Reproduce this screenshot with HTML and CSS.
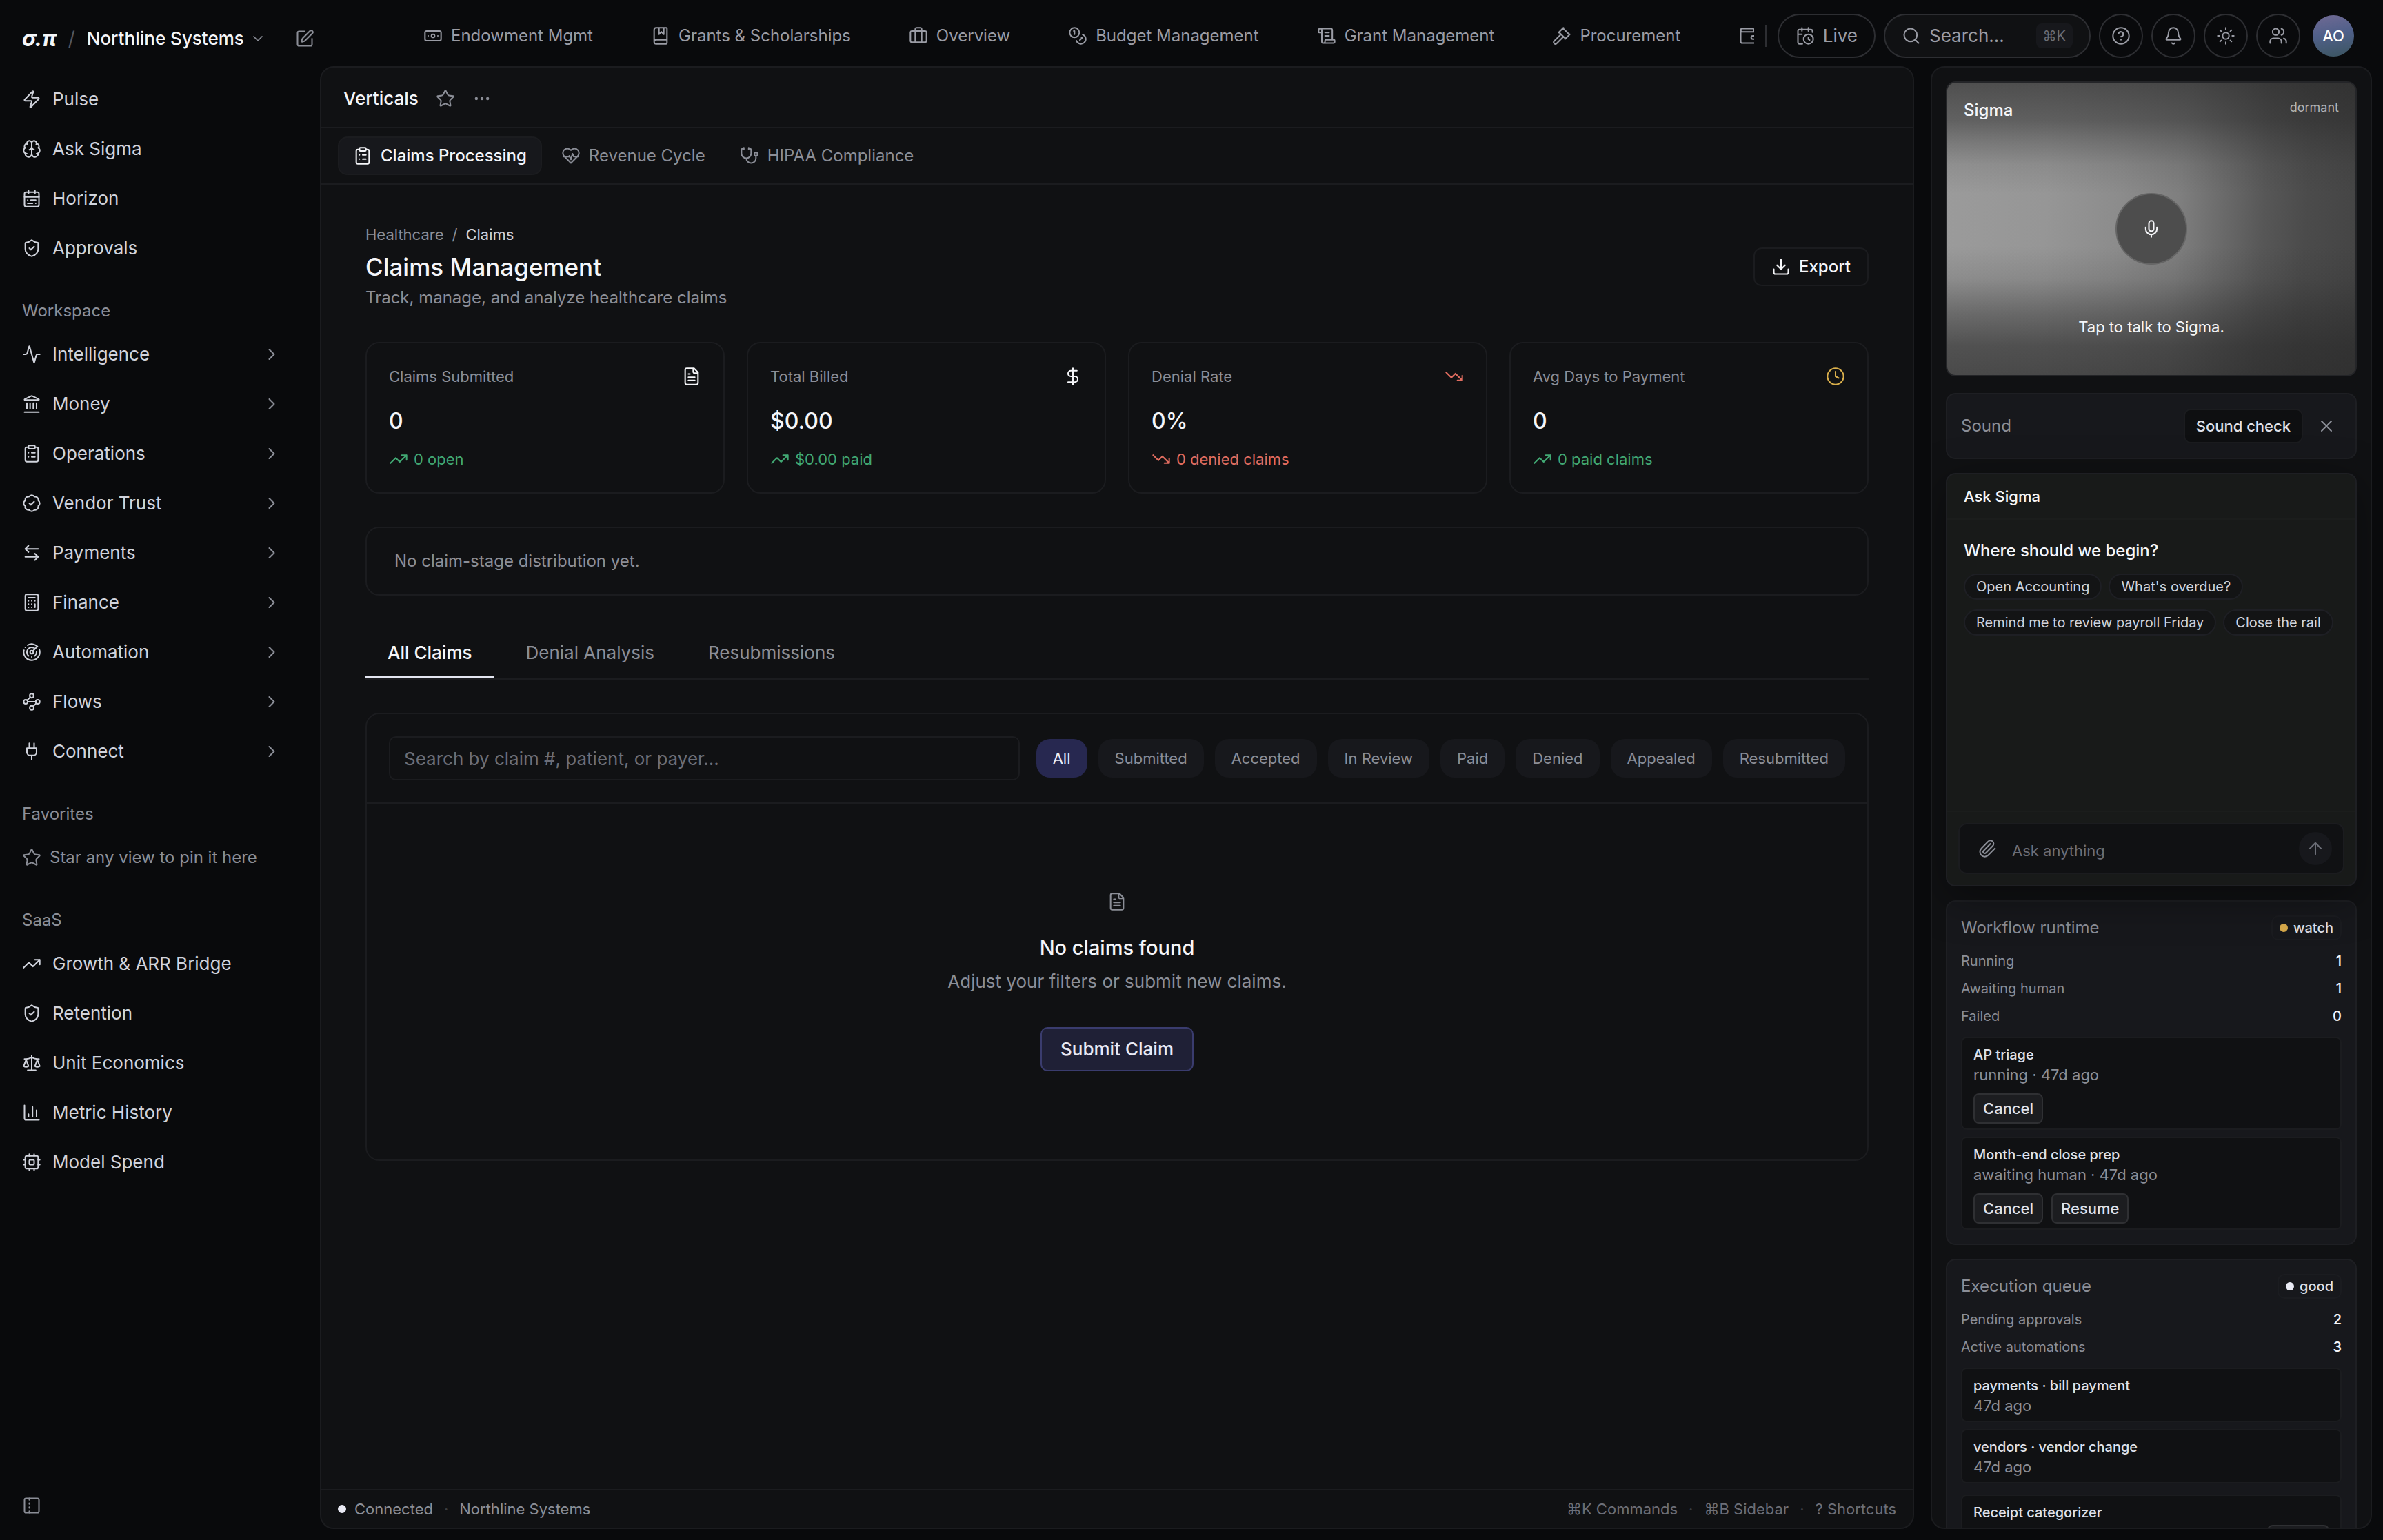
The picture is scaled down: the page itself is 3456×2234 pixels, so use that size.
FILE: index.html
```html
<!DOCTYPE html>
<html lang="en">
<head>
<meta charset="utf-8">
<title>Claims Management</title>
<meta name="viewport" content="width=device-width, initial-scale=1">
<link rel="stylesheet" href="styles.css">
</head>
<body>
<svg class="sprite" aria-hidden="true">
  <symbol id="zap" viewBox="0 0 24 24"><path d="M4 14a1 1 0 0 1-.78-1.63l9.9-10.2a.5.5 0 0 1 .86.46l-1.92 6.02A1 1 0 0 0 13 10h7a1 1 0 0 1 .78 1.63l-9.9 10.2a.5.5 0 0 1-.86-.46l1.92-6.02A1 1 0 0 0 11 14z"/></symbol>
  <symbol id="brain" viewBox="0 0 24 24"><path d="M12 18V5M15 13a4.17 4.17 0 0 1-3-4 4.17 4.17 0 0 1-3 4M17.598 6.5A3 3 0 1 0 12 5a3 3 0 1 0-5.598 1.5M17.997 5.125a4 4 0 0 1 2.526 5.77M18 18a4 4 0 0 0 2-7.464M19.967 17.483A4 4 0 1 1 12 18a4 4 0 1 1-7.967-.517M6 18a4 4 0 0 1-2-7.464M6.003 5.125a4 4 0 0 0-2.526 5.77"/></symbol>
  <symbol id="calendar-range" viewBox="0 0 24 24"><rect width="18" height="18" x="3" y="4" rx="2"/><path d="M16 2v4M3 10h18M8 2v4M17 14h-6M13 18H7M7 14h.01M17 18h.01"/></symbol>
  <symbol id="shield-check" viewBox="0 0 24 24"><path d="M20 13c0 5-3.5 7.5-7.66 8.95a1 1 0 0 1-.67-.01C7.5 20.5 4 18 4 13V6a1 1 0 0 1 1-1c2 0 4.5-1.2 6.24-2.72a1.17 1.17 0 0 1 1.52 0C14.51 3.81 17 5 19 5a1 1 0 0 1 1 1zM9 12l2 2 4-4"/></symbol>
  <symbol id="activity" viewBox="0 0 24 24"><path d="M22 12h-2.48a2 2 0 0 0-1.93 1.46l-2.35 8.36a.25.25 0 0 1-.48 0L9.24 2.18a.25.25 0 0 0-.48 0l-2.35 8.36A2 2 0 0 1 4.49 12H2"/></symbol>
  <symbol id="landmark" viewBox="0 0 24 24"><path d="M10 18v-7M11.12 2.198a2 2 0 0 1 1.76.006l7.866 3.847c.476.233.31.949-.22.949H3.474c-.53 0-.695-.716-.22-.949zM14 18v-7M18 18v-7M3 22h18M6 18v-7"/></symbol>
  <symbol id="clipboard-list" viewBox="0 0 24 24"><rect width="8" height="4" x="8" y="2" rx="1"/><path d="M16 4h2a2 2 0 0 1 2 2v14a2 2 0 0 1-2 2H6a2 2 0 0 1-2-2V6a2 2 0 0 1 2-2h2M12 11h4M12 16h4M8 11h.01M8 16h.01"/></symbol>
  <symbol id="badge-check" viewBox="0 0 24 24"><path d="M3.85 8.62a4 4 0 0 1 4.78-4.77 4 4 0 0 1 6.74 0 4 4 0 0 1 4.78 4.78 4 4 0 0 1 0 6.74 4 4 0 0 1-4.77 4.78 4 4 0 0 1-6.75 0 4 4 0 0 1-4.78-4.77 4 4 0 0 1 0-6.76ZM9 12l2 2 4-4"/></symbol>
  <symbol id="arrow-left-right" viewBox="0 0 24 24"><path d="M8 3 4 7l4 4M4 7h16M16 21l4-4-4-4M20 17H4"/></symbol>
  <symbol id="calculator" viewBox="0 0 24 24"><rect width="16" height="20" x="4" y="2" rx="2"/><path d="M8 6h8M16 14v4M16 10h.01M12 10h.01M8 10h.01M12 14h.01M8 14h.01M12 18h.01M8 18h.01"/></symbol>
  <symbol id="radar" viewBox="0 0 24 24"><path d="M19.07 4.93A10 10 0 0 0 6.99 3.34M4 6h.01M2.29 9.62A10 10 0 1 0 21.31 8.35M16.24 7.76A6 6 0 1 0 8.23 16.67M12 18h.01M17.99 11.66A6 6 0 0 1 15.77 16.67M13.41 10.59l5.66-5.66"/><circle cx="12" cy="12" r="2"/></symbol>
  <symbol id="waypoints" viewBox="0 0 24 24"><circle cx="12" cy="4.5" r="2.5"/><circle cx="4.5" cy="12" r="2.5"/><circle cx="19.5" cy="12" r="2.5"/><circle cx="12" cy="19.5" r="2.5"/><path d="M10.2 6.3l-3.9 3.9M7 12h10M13.8 17.7l3.9-3.9"/></symbol>
  <symbol id="plug" viewBox="0 0 24 24"><path d="M12 22v-5M9 8V2M15 8V2M18 8v5a4 4 0 0 1-4 4h-4a4 4 0 0 1-4-4V8Z"/></symbol>
  <symbol id="star" viewBox="0 0 24 24"><path d="M11.525 2.295a.53.53 0 0 1 .95 0l2.31 4.679a2.123 2.123 0 0 0 1.595 1.16l5.166.756a.53.53 0 0 1 .294.904l-3.736 3.638a2.123 2.123 0 0 0-.611 1.878l.882 5.14a.53.53 0 0 1-.771.56l-4.618-2.428a2.122 2.122 0 0 0-1.973 0L6.396 21.01a.53.53 0 0 1-.77-.56l.881-5.139a2.122 2.122 0 0 0-.611-1.879L2.16 9.795a.53.53 0 0 1 .294-.906l5.165-.755a2.122 2.122 0 0 0 1.597-1.16z"/></symbol>
  <symbol id="trending-up" viewBox="0 0 24 24"><path d="M16 7h6v6M22 7l-8.500 8.500-5-5L2 17"/></symbol>
  <symbol id="trending-down" viewBox="0 0 24 24"><path d="M16 17h6v-6M22 17l-8.500-8.500-5 5L2 7"/></symbol>
  <symbol id="scale" viewBox="0 0 24 24"><path d="M16 16l3-8 3 8c-.87.65-1.92 1-3 1s-2.13-.35-3-1ZM2 16l3-8 3 8c-.87.65-1.92 1-3 1s-2.13-.35-3-1ZM7 21h10M12 3v18M3 7h2c2 0 5-1 7-2 2 1 5 2 7 2h2"/></symbol>
  <symbol id="chart" viewBox="0 0 24 24"><path d="M3 3v16a2 2 0 0 0 2 2h16M18 17V9M13 17V5M8 17v-3"/></symbol>
  <symbol id="cpu" viewBox="0 0 24 24"><rect width="16" height="16" x="4" y="4" rx="2"/><rect width="6" height="6" x="9" y="9" rx="1"/><path d="M15 2v2M15 20v2M2 15h2M2 9h2M20 15h2M20 9h2M9 2v2M9 20v2"/></symbol>
  <symbol id="square-pen" viewBox="0 0 24 24"><path d="M12 3H5a2 2 0 0 0-2 2v14a2 2 0 0 0 2 2h14a2 2 0 0 0 2-2v-7M18.375 2.625a1 1 0 0 1 3 3l-9.013 9.014a2 2 0 0 1-.853.505l-2.873.84a.5.5 0 0 1-.62-.62l.84-2.873a2 2 0 0 1 .506-.852z"/></symbol>
  <symbol id="panel" viewBox="0 0 24 24"><rect width="18" height="18" x="3" y="3" rx="2"/><path d="M9 14v1M9 19v2M9 3v2M9 9v1"/></symbol>
  <symbol id="chevron-right" viewBox="0 0 24 24"><path d="M9 18l6-6-6-6"/></symbol>
  <symbol id="chevron-down" viewBox="0 0 24 24"><path d="M6 9l6 6 6-6"/></symbol>
  <symbol id="banknote" viewBox="0 0 24 24"><rect width="20" height="12" x="2" y="6" rx="2"/><circle cx="12" cy="12" r="2"/><path d="M6 12h.01M18 12h.01"/></symbol>
  <symbol id="book" viewBox="0 0 24 24"><path d="M10 2v8l3-3 3 3V2M4 19.500v-15A2.500 2.500 0 0 1 6.500 2H19a1 1 0 0 1 1 1v18a1 1 0 0 1-1 1H6.500a1 1 0 0 1 0-5H20"/></symbol>
  <symbol id="briefcase" viewBox="0 0 24 24"><path d="M16 20V4a2 2 0 0 0-2-2h-4a2 2 0 0 0-2 2v16"/><rect width="20" height="14" x="2" y="6" rx="2"/></symbol>
  <symbol id="coins" viewBox="0 0 24 24"><circle cx="8" cy="8" r="6"/><path d="M18.090 10.370A6 6 0 1 1 10.340 18M7 6h1v4M16.710 13.880l.7.710-2.820 2.820"/></symbol>
  <symbol id="scroll" viewBox="0 0 24 24"><path d="M15 12h-5M15 8h-5M19 17V5a2 2 0 0 0-2-2H4M8 21h12a2 2 0 0 0 2-2v-1a1 1 0 0 0-1-1H11a1 1 0 0 0-1 1v1a2 2 0 1 1-4 0V5a2 2 0 1 0-4 0v2a1 1 0 0 0 1 1h3"/></symbol>
  <symbol id="gavel" viewBox="0 0 24 24"><path d="M14 13l-8.381 8.380a1 1 0 0 1-3.001-3l8.384-8.381M16 16l6-6M21.500 10.500l-8-8M8 8l6-6M8.500 7.500l8 8"/></symbol>
  <symbol id="wallet" viewBox="0 0 24 24"><path d="M19 7V4a1 1 0 0 0-1-1H5a2 2 0 0 0 0 4h15a1 1 0 0 1 1 1v4h-3a2 2 0 0 0 0 4h3a1 1 0 0 0 1-1v-2a1 1 0 0 0-1-1M3 5v14a2 2 0 0 0 2 2h15a1 1 0 0 0 1-1v-4"/></symbol>
  <symbol id="calendar-clock" viewBox="0 0 24 24"><path d="M16 14v2.200l1.600 1M16 2v4M21 7.500V6a2 2 0 0 0-2-2H5a2 2 0 0 0-2 2v14a2 2 0 0 0 2 2h3.500M3 10h5M8 2v4"/><circle cx="16" cy="16" r="6"/></symbol>
  <symbol id="search" viewBox="0 0 24 24"><circle cx="11" cy="11" r="8"/><path d="M21 21l-4.340-4.340"/></symbol>
  <symbol id="help" viewBox="0 0 24 24"><circle cx="12" cy="12" r="10"/><path d="M9.090 9a3 3 0 0 1 5.830 1c0 2-3 3-3 3M12 17h.01"/></symbol>
  <symbol id="bell" viewBox="0 0 24 24"><path d="M10.268 21a2 2 0 0 0 3.464 0M3.262 15.326A1 1 0 0 0 4 17h16a1 1 0 0 0 .74-1.673C19.410 13.956 18 12.499 18 8A6 6 0 0 0 6 8c0 4.499-1.411 5.956-2.738 7.326"/></symbol>
  <symbol id="sun" viewBox="0 0 24 24"><circle cx="12" cy="12" r="4"/><path d="M12 2v2M12 20v2M4.930 4.930l1.410 1.410M17.660 17.660l1.410 1.410M2 12h2M20 12h2M6.340 17.660l-1.410 1.410M19.070 4.930l-1.410 1.410"/></symbol>
  <symbol id="users" viewBox="0 0 24 24"><path d="M16 21v-2a4 4 0 0 0-4-4H6a4 4 0 0 0-4 4v2M16 3.128a4 4 0 0 1 0 7.744M22 21v-2a4 4 0 0 0-3-3.870"/><circle cx="9" cy="7" r="4"/></symbol>
  <symbol id="dots" viewBox="0 0 24 24"><circle cx="5" cy="12" r="1"/><circle cx="12" cy="12" r="1"/><circle cx="19" cy="12" r="1"/></symbol>
  <symbol id="heart-pulse" viewBox="0 0 24 24"><path d="M19 14c1.490-1.460 3-3.210 3-5.500A5.500 5.500 0 0 0 16.500 3c-1.760 0-3 .5-4.500 2-1.500-1.500-2.740-2-4.500-2A5.500 5.500 0 0 0 2 8.500c0 2.300 1.500 4.050 3 5.500l7 7ZM3.220 13H9.500l.5-1 2 4.500 2-7 1.500 3.500h5.270"/></symbol>
  <symbol id="stethoscope" viewBox="0 0 24 24"><path d="M11 2v2M5 2v2M5 3H4a2 2 0 0 0-2 2v4a6 6 0 0 0 12 0V5a2 2 0 0 0-2-2h-1M8 15a6 6 0 0 0 12 0v-3"/><circle cx="20" cy="10" r="2"/></symbol>
  <symbol id="file-text" viewBox="0 0 24 24"><path d="M15 2H6a2 2 0 0 0-2 2v16a2 2 0 0 0 2 2h12a2 2 0 0 0 2-2V7ZM14 2v4a2 2 0 0 0 2 2h4M10 9H8M16 13H8M16 17H8"/></symbol>
  <symbol id="dollar" viewBox="0 0 24 24"><path d="M12 2v20M17 5H9.500a3.500 3.500 0 0 0 0 7h5a3.500 3.500 0 0 1 0 7H6"/></symbol>
  <symbol id="clock" viewBox="0 0 24 24"><circle cx="12" cy="12" r="10"/><path d="M12 6v6l4 2"/></symbol>
  <symbol id="download" viewBox="0 0 24 24"><path d="M12 15V3M21 15v4a2 2 0 0 1-2 2H5a2 2 0 0 1-2-2v-4M7 10l5 5 5-5"/></symbol>
  <symbol id="mic" viewBox="0 0 24 24"><path d="M12 19v3M19 10v2a7 7 0 0 1-14 0v-2"/><rect x="9" y="2" width="6" height="13" rx="3"/></symbol>
  <symbol id="close" viewBox="0 0 24 24"><path d="M18 6 6 18M6 6l12 12"/></symbol>
  <symbol id="paperclip" viewBox="0 0 24 24"><path d="M16 6l-8.414 8.586a2 2 0 0 0 2.829 2.829l8.414-8.586a4 4 0 1 0-5.657-5.657l-8.379 8.551a6 6 0 1 0 8.485 8.485l8.379-8.551"/></symbol>
  <symbol id="arrow-up" viewBox="0 0 24 24"><path d="M5 12l7-7 7 7M12 19V5"/></symbol>
</svg>

<div class="app">
  <aside class="sidebar">
    <div class="brand">
      <a class="logo" href="#">σ.π</a>
      <span class="brand-slash">/</span>
      <button class="org" type="button">Northline Systems <svg class="icon icon-sm"><use href="#chevron-down"/></svg></button>
      <button class="ghost compose" type="button" aria-label="New note"><svg class="icon"><use href="#square-pen"/></svg></button>
    </div>
    <nav class="side-nav" aria-label="Primary">
      <a class="side-item" href="#"><svg class="icon"><use href="#zap"/></svg><span>Pulse</span></a>
      <a class="side-item" href="#"><svg class="icon"><use href="#brain"/></svg><span>Ask Sigma</span></a>
      <a class="side-item" href="#"><svg class="icon"><use href="#calendar-range"/></svg><span>Horizon</span></a>
      <a class="side-item" href="#"><svg class="icon"><use href="#shield-check"/></svg><span>Approvals</span></a>

      <h2 class="side-label">Workspace</h2>
      <button class="side-item" type="button"><svg class="icon"><use href="#activity"/></svg><span>Intelligence</span><svg class="icon caret"><use href="#chevron-right"/></svg></button>
      <button class="side-item" type="button"><svg class="icon"><use href="#landmark"/></svg><span>Money</span><svg class="icon caret"><use href="#chevron-right"/></svg></button>
      <button class="side-item" type="button"><svg class="icon"><use href="#clipboard-list"/></svg><span>Operations</span><svg class="icon caret"><use href="#chevron-right"/></svg></button>
      <button class="side-item" type="button"><svg class="icon"><use href="#badge-check"/></svg><span>Vendor Trust</span><svg class="icon caret"><use href="#chevron-right"/></svg></button>
      <button class="side-item" type="button"><svg class="icon"><use href="#arrow-left-right"/></svg><span>Payments</span><svg class="icon caret"><use href="#chevron-right"/></svg></button>
      <button class="side-item" type="button"><svg class="icon"><use href="#calculator"/></svg><span>Finance</span><svg class="icon caret"><use href="#chevron-right"/></svg></button>
      <button class="side-item" type="button"><svg class="icon"><use href="#radar"/></svg><span>Automation</span><svg class="icon caret"><use href="#chevron-right"/></svg></button>
      <button class="side-item" type="button"><svg class="icon"><use href="#waypoints"/></svg><span>Flows</span><svg class="icon caret"><use href="#chevron-right"/></svg></button>
      <button class="side-item" type="button"><svg class="icon"><use href="#plug"/></svg><span>Connect</span><svg class="icon caret"><use href="#chevron-right"/></svg></button>

      <h2 class="side-label">Favorites</h2>
      <p class="side-hint"><svg class="icon"><use href="#star"/></svg><span>Star any view to pin it here</span></p>

      <h2 class="side-label">SaaS</h2>
      <a class="side-item" href="#"><svg class="icon"><use href="#trending-up"/></svg><span>Growth &amp; ARR Bridge</span></a>
      <a class="side-item" href="#"><svg class="icon"><use href="#shield-check"/></svg><span>Retention</span></a>
      <a class="side-item" href="#"><svg class="icon"><use href="#scale"/></svg><span>Unit Economics</span></a>
      <a class="side-item" href="#"><svg class="icon"><use href="#chart"/></svg><span>Metric History</span></a>
      <a class="side-item" href="#"><svg class="icon"><use href="#cpu"/></svg><span>Model Spend</span></a>
    </nav>
    <button class="ghost collapse" type="button" aria-label="Collapse sidebar"><svg class="icon"><use href="#panel"/></svg></button>
  </aside>

  <div class="stage">
    <header class="topbar">
      <nav class="top-nav" aria-label="Modules">
        <a href="#"><svg class="icon"><use href="#banknote"/></svg>Endowment Mgmt</a>
        <a href="#"><svg class="icon"><use href="#book"/></svg>Grants &amp; Scholarships</a>
        <a href="#"><svg class="icon"><use href="#briefcase"/></svg>Overview</a>
        <a href="#"><svg class="icon"><use href="#coins"/></svg>Budget Management</a>
        <a href="#"><svg class="icon"><use href="#scroll"/></svg>Grant Management</a>
        <a href="#"><svg class="icon"><use href="#gavel"/></svg>Procurement</a>
        <a href="#" aria-label="Wallet"><svg class="icon"><use href="#wallet"/></svg></a>
      </nav>
      <div class="tools">
        <button class="pill-btn live" type="button"><svg class="icon"><use href="#calendar-clock"/></svg>Live</button>
        <button class="pill-btn find" type="button"><svg class="icon"><use href="#search"/></svg>Search...<kbd>⌘K</kbd></button>
        <button class="round-btn" type="button" aria-label="Help"><svg class="icon"><use href="#help"/></svg></button>
        <button class="round-btn" type="button" aria-label="Notifications"><svg class="icon"><use href="#bell"/></svg></button>
        <button class="round-btn" type="button" aria-label="Theme"><svg class="icon"><use href="#sun"/></svg></button>
        <button class="round-btn" type="button" aria-label="Team"><svg class="icon"><use href="#users"/></svg></button>
        <button class="avatar" type="button">AO</button>
      </div>
    </header>

    <div class="columns">
      <main class="panel">
        <div class="view-head">
          <h2>Verticals</h2>
          <button class="ghost" type="button" aria-label="Favorite"><svg class="icon"><use href="#star"/></svg></button>
          <button class="ghost" type="button" aria-label="More"><svg class="icon"><use href="#dots"/></svg></button>
        </div>
        <nav class="view-tabs" aria-label="Verticals">
          <a class="view-tab active" href="#"><svg class="icon"><use href="#clipboard-list"/></svg>Claims Processing</a>
          <a class="view-tab" href="#"><svg class="icon"><use href="#heart-pulse"/></svg>Revenue Cycle</a>
          <a class="view-tab" href="#"><svg class="icon"><use href="#stethoscope"/></svg>HIPAA Compliance</a>
        </nav>

        <div class="content">
          <div class="page-head">
            <div>
              <nav class="crumbs" aria-label="Breadcrumb"><a href="#">Healthcare</a><span>/</span><span class="here">Claims</span></nav>
              <h1>Claims Management</h1>
              <p>Track, manage, and analyze healthcare claims</p>
            </div>
            <button class="export" type="button"><svg class="icon"><use href="#download"/></svg>Export</button>
          </div>

          <section class="stats">
            <article class="stat">
              <div class="stat-top"><span>Claims Submitted</span><svg class="icon"><use href="#file-text"/></svg></div>
              <strong>0</strong>
              <p class="trend up"><svg class="icon"><use href="#trending-up"/></svg>0 open</p>
            </article>
            <article class="stat">
              <div class="stat-top"><span>Total Billed</span><svg class="icon"><use href="#dollar"/></svg></div>
              <strong>$0.00</strong>
              <p class="trend up"><svg class="icon"><use href="#trending-up"/></svg>$0.00 paid</p>
            </article>
            <article class="stat">
              <div class="stat-top"><span>Denial Rate</span><svg class="icon red"><use href="#trending-down"/></svg></div>
              <strong>0%</strong>
              <p class="trend red"><svg class="icon"><use href="#trending-down"/></svg>0 denied claims</p>
            </article>
            <article class="stat">
              <div class="stat-top"><span>Avg Days to Payment</span><svg class="icon amber"><use href="#clock"/></svg></div>
              <strong>0</strong>
              <p class="trend up"><svg class="icon"><use href="#trending-up"/></svg>0 paid claims</p>
            </article>
          </section>

          <p class="notice">No claim-stage distribution yet.</p>

          <div class="tabs" role="tablist">
            <button class="tab active" type="button" role="tab" aria-selected="true">All Claims</button>
            <button class="tab" type="button" role="tab" aria-selected="false">Denial Analysis</button>
            <button class="tab" type="button" role="tab" aria-selected="false">Resubmissions</button>
          </div>

          <section class="claims">
            <div class="claims-bar">
              <input type="search" aria-label="Search claims" placeholder="Search by claim #, patient, or payer...">
              <div class="filters">
                <button class="filter active" type="button">All</button>
                <button class="filter" type="button">Submitted</button>
                <button class="filter" type="button">Accepted</button>
                <button class="filter" type="button">In Review</button>
                <button class="filter" type="button">Paid</button>
                <button class="filter" type="button">Denied</button>
                <button class="filter" type="button">Appealed</button>
                <button class="filter" type="button">Resubmitted</button>
              </div>
            </div>
            <div class="empty">
              <svg class="icon"><use href="#file-text"/></svg>
              <h3>No claims found</h3>
              <p>Adjust your filters or submit new claims.</p>
              <button class="primary" type="button">Submit Claim</button>
            </div>
          </section>
        </div>

        <footer class="statusbar">
          <span class="dot"></span><span>Connected</span><span class="sep">·</span><span>Northline Systems</span>
          <div class="hints"><span>⌘K Commands</span><span class="sep">·</span><span>⌘B Sidebar</span><span class="sep">·</span><span>? Shortcuts</span></div>
        </footer>
      </main>

      <aside class="panel rail">
        <section class="voice">
          <div class="voice-top"><h2>Sigma</h2><span>dormant</span></div>
          <button class="mic" type="button" aria-label="Talk to Sigma"><svg class="icon"><use href="#mic"/></svg></button>
          <p>Tap to talk to Sigma.</p>
        </section>

        <section class="box sound">
          <h2>Sound</h2>
          <button class="sound-check" type="button">Sound check</button>
          <button class="ghost dismiss" type="button" aria-label="Dismiss"><svg class="icon"><use href="#close"/></svg></button>
        </section>

        <section class="ask">
          <h2>Ask Sigma</h2>
          <div class="ask-body">
            <h3>Where should we begin?</h3>
            <div class="chips">
              <button class="chip" type="button">Open Accounting</button>
              <button class="chip" type="button">What's overdue?</button>
              <button class="chip" type="button">Remind me to review payroll Friday</button>
              <button class="chip" type="button">Close the rail</button>
            </div>
          </div>
          <form class="ask-foot">
            <div class="composer">
              <button class="ghost attach" type="button" aria-label="Attach"><svg class="icon"><use href="#paperclip"/></svg></button>
              <input type="text" aria-label="Ask anything" placeholder="Ask anything">
              <button class="send" type="submit" aria-label="Send"><svg class="icon"><use href="#arrow-up"/></svg></button>
            </div>
          </form>
        </section>

        <section class="box">
          <div class="box-head"><h2>Workflow runtime</h2><span class="badge"><i class="dot watch"></i>watch</span></div>
          <dl class="facts">
            <div><dt>Running</dt><dd>1</dd></div>
            <div><dt>Awaiting human</dt><dd>1</dd></div>
            <div><dt>Failed</dt><dd>0</dd></div>
          </dl>
          <ul class="runs">
            <li class="run"><h3>AP triage</h3><p>running · 47d ago</p><div class="run-actions"><button class="mini" type="button">Cancel</button></div></li>
            <li class="run"><h3>Month-end close prep</h3><p>awaiting human · 47d ago</p><div class="run-actions"><button class="mini" type="button">Cancel</button><button class="mini" type="button">Resume</button></div></li>
          </ul>
        </section>

        <section class="box">
          <div class="box-head"><h2>Execution queue</h2><span class="badge"><i class="dot"></i>good</span></div>
          <dl class="facts">
            <div><dt>Pending approvals</dt><dd>2</dd></div>
            <div><dt>Active automations</dt><dd>3</dd></div>
          </dl>
          <ul class="runs">
            <li class="run"><h3>payments · bill payment</h3><p>47d ago</p></li>
            <li class="run"><h3>vendors · vendor change</h3><p>47d ago</p></li>
          </ul>
          <ul class="runs">
            <li class="run"><h3>Receipt categorizer</h3><div class="run-side"><button class="mini" type="button" aria-label="Pause"></button></div></li>
          </ul>
        </section>
      </aside>
    </div>
  </div>
</div>
</body>
</html>
```
FILE: styles.css
```css
:root {
  --bg: #090a0c;
  --panel: #101113;
  --raised: #17181c;
  --line: #1b1c1f;
  --line-strong: #2d2e32;
  --text: #f5f6f9;
  --soft: #d0d3dc;
  --muted: #8b8e97;
  --faint: #6c6e77;
  --green: #41a873;
  --red: #e16d60;
  --amber: #dbb04c;
}

* { box-sizing: border-box; }

body {
  margin: 0;
  background: var(--bg);
  color: var(--text);
  font: 400 24px/32px Inter, "Noto Sans", sans-serif;
  overflow: hidden;
}

h1, h2, h3, p, ul, dl, dd { margin: 0; padding: 0; font-weight: 400; }
ul { list-style: none; }
a { color: inherit; text-decoration: none; }
button, input {
  font: inherit;
  color: inherit;
  background: none;
  border: 0;
  padding: 0;
  margin: 0;
}

.sprite { display: none; }
.icon {
  flex: none;
  display: block;
  width: 28px;
  height: 28px;
  fill: none;
  stroke: currentColor;
  stroke-width: 1.75;
  stroke-linecap: round;
  stroke-linejoin: round;
}
.icon-sm { width: 24px; height: 24px; }
.ghost { display: flex; color: var(--muted); }
.red { color: var(--red); }
.amber { color: var(--amber); }
.dot {
  width: 12px;
  height: 12px;
  border-radius: 50%;
  background: #e9eaf4;
}
.dot.watch { background: #d9ab4b; }

.app { display: flex; height: 100vh; }

/* Sidebar */
.sidebar {
  flex: none;
  width: 464px;
  display: flex;
  flex-direction: column;
  padding: 32px 8px 36px 32px;
}
.brand { display: flex; align-items: center; height: 48px; }
.logo { font-size: 32px; font-weight: 700; font-style: italic; }
.brand-slash { margin: 0 17px; color: #55575e; font-size: 28px; }
.org {
  display: flex;
  align-items: center;
  gap: 8px;
  font-size: 26px;
  font-weight: 500;
}
.org .icon { color: var(--muted); }
.compose { margin-left: auto; }
.side-nav { flex: 1; margin-top: 28px; }
.side-item, .side-hint {
  display: flex;
  align-items: center;
  gap: 16px;
  width: 376px;
  height: 72px;
  font-size: 26px;
  color: var(--soft);
  text-align: left;
}
.side-hint { gap: 12px; font-size: 24px; color: var(--muted); }
.caret { margin-left: auto; color: var(--muted); }
.side-label {
  margin-top: 28px;
  font-size: 24px;
  line-height: 54px;
  color: var(--muted);
}
.collapse { width: 28px; }

/* Top bar */
.stage { flex: 1; min-width: 0; display: flex; flex-direction: column; }
.topbar {
  flex: none;
  display: flex;
  align-items: center;
  height: 96px;
  padding: 8px 42px 0 0;
  color: #9a9ca5;
}
.top-nav {
  flex: 1;
  min-width: 0;
  display: flex;
  gap: 84px;
  padding-left: 150px;
  overflow: hidden;
}
.top-nav a { display: flex; align-items: center; gap: 12px; white-space: nowrap; }
.tools { display: flex; align-items: center; gap: 12px; }
.tools::before {
  content: "";
  width: 2px;
  height: 32px;
  margin: 0 4px 0 16px;
  background: var(--line-strong);
}
.pill-btn, .round-btn {
  display: flex;
  align-items: center;
  height: 64px;
  border: 2px solid var(--line-strong);
  border-radius: 32px;
}
.pill-btn { gap: 12px; padding: 0 24px; font-size: 26px; }
.find { width: 300px; background: var(--panel); }
.find kbd {
  margin-left: auto;
  padding: 0 10px;
  border-radius: 8px;
  background: var(--raised);
  font: 400 20px/36px Inter, sans-serif;
  color: var(--faint);
}
.round-btn { width: 64px; justify-content: center; }
.avatar {
  width: 60px;
  height: 60px;
  margin-left: 6px;
  border-radius: 50%;
  background: linear-gradient(170deg, #716a94, #50608a 45%, #3b5560);
  color: #fff;
  font-size: 22px;
  font-weight: 500;
}

/* Panels */
.columns {
  flex: 1;
  min-height: 0;
  display: flex;
  gap: 24px;
  padding: 0 16px 16px 0;
}
.panel {
  flex: 1;
  min-width: 0;
  display: flex;
  flex-direction: column;
  border: 2px solid var(--line);
  border-radius: 20px;
  background: var(--panel);
  overflow: hidden;
}
.view-head {
  display: flex;
  align-items: center;
  gap: 25px;
  height: 88px;
  padding: 4px 32px 0;
  border-bottom: 2px solid var(--line);
}
.view-head h2 { font-size: 26px; font-weight: 500; }
.view-tabs {
  display: flex;
  gap: 6px;
  padding: 12px 24px;
  border-bottom: 2px solid var(--line);
}
.view-tab {
  display: flex;
  align-items: center;
  gap: 12px;
  height: 56px;
  padding: 0 20px;
  border: 2px solid transparent;
  border-radius: 14px;
  color: var(--muted);
}
.view-tab.active {
  background: var(--raised);
  border-color: var(--line);
  color: var(--text);
  font-weight: 500;
}

/* Page */
.content { flex: 1; min-height: 0; padding: 56px 64px 0; }
.page-head {
  display: flex;
  align-items: center;
  justify-content: space-between;
  margin-bottom: 46px;
}
.crumbs { display: flex; gap: 12px; font-size: 22px; color: var(--muted); }
.crumbs .here { color: var(--soft); }
.page-head h1 {
  margin: 8px 0 4px;
  font-size: 35px;
  line-height: 46px;
  font-weight: 500;
}
.page-head p { line-height: 36px; color: var(--muted); }
.export {
  display: flex;
  align-items: center;
  gap: 12px;
  height: 56px;
  padding: 0 24px;
  border: 2px solid var(--line);
  border-radius: 12px;
  font-weight: 500;
}

.stats { display: grid; grid-template-columns: repeat(4, 1fr); gap: 32px; }
.stat { padding: 32px; border: 2px solid var(--line); border-radius: 20px; }
.stat-top {
  display: flex;
  align-items: center;
  justify-content: space-between;
  font-size: 22px;
}
.stat-top span { color: var(--muted); }
.stat strong {
  display: block;
  margin: 28px 0 18px;
  font-size: 32px;
  line-height: 42px;
  font-weight: 500;
}
.trend { display: flex; align-items: center; gap: 8px; font-size: 22px; }
.up { color: var(--green); }

.notice {
  margin: 48px 0;
  padding: 32px 40px;
  border: 2px solid var(--line);
  border-radius: 20px;
  color: var(--muted);
}

.tabs { display: flex; gap: 14px; border-bottom: 2px solid var(--line); }
.tab {
  height: 72px;
  padding: 2px 32px 0;
  border-bottom: 4px solid transparent;
  font-size: 26px;
  color: var(--muted);
}
.tab.active { color: var(--text); font-weight: 500; border-color: #e4e6f1; }

.claims { margin-top: 48px; border: 2px solid var(--line); border-radius: 20px; }
.claims-bar {
  display: flex;
  align-items: center;
  gap: 24px;
  padding: 32px;
  border-bottom: 2px solid var(--line);
}
.claims-bar input {
  flex: 1;
  min-width: 0;
  height: 64px;
  padding: 0 20px;
  border: 2px solid var(--line);
  border-radius: 10px;
  font-size: 26px;
}
input::placeholder { color: var(--faint); opacity: 1; }
.filters { display: flex; gap: 16px; }
.filter {
  height: 56px;
  padding: 0 24px;
  border-radius: 20px;
  background: var(--raised);
  font-size: 22px;
  color: var(--muted);
}
.filter.active { background: #272850; color: #eceefa; }

.empty {
  display: flex;
  flex-direction: column;
  align-items: center;
  padding: 128px 32px;
  color: var(--muted);
}
.empty h3 {
  margin: 32px 0 8px;
  font-size: 29px;
  line-height: 42px;
  font-weight: 500;
  color: var(--text);
}
.empty p { font-size: 26px; line-height: 40px; }
.primary {
  height: 64px;
  margin-top: 46px;
  padding: 0 27px;
  border: 2px solid #3a3c6e;
  border-radius: 10px;
  background: #1f2036;
  color: #e8e9f4;
  font-size: 26px;
  font-weight: 500;
}

.statusbar {
  display: flex;
  align-items: center;
  height: 56px;
  padding: 0 24px;
  border-top: 2px solid var(--line);
  font-size: 22px;
  color: var(--muted);
}
.statusbar .dot { margin-right: 12px; }
.sep { margin: 0 16px; color: #3b3d42; }
.hints { display: flex; margin-left: auto; color: var(--faint); }

/* Rail */
.rail {
  flex: none;
  width: 640px;
  padding: 20px;
  gap: 20px;
}
.rail > section { flex: none; }
.rail h2 { font-size: 24px; }
.voice {
  display: grid;
  grid-template-rows: 1fr auto 1fr;
  justify-items: center;
  height: 428px;
  margin-bottom: 4px;
  padding: 24px;
  border: 2px solid #242528;
  border-radius: 14px;
  background:
    linear-gradient(180deg,
      rgba(40, 40, 40, .66),
      rgba(40, 40, 40, .5) 13%,
      rgba(40, 40, 40, .3) 20%,
      rgba(40, 40, 40, .1) 28%,
      rgba(40, 40, 40, 0) 38%,
      rgba(40, 40, 40, 0) 56%,
      rgba(40, 40, 40, .12) 67%,
      rgba(40, 40, 40, .42) 79%,
      rgba(40, 40, 40, .64) 90%,
      rgba(40, 40, 40, .7)),
    linear-gradient(94deg, #9b9b9b, #969696 25%, #8c8c8c 42%, #7f7f7f 56%, #6b6b6b 66%, #575757 76%, #4b4b4b 86%, #444);
}
.voice-top { display: flex; justify-content: space-between; width: 100%; }
.rail .voice-top h2 { font-weight: 500; }
.voice-top span { font-size: 18px; line-height: 24px; color: #b4b4b4; }
.mic {
  display: grid;
  place-items: center;
  width: 104px;
  height: 104px;
  border: 2px solid #656565;
  border-radius: 50%;
  background: #4d4d4d;
}
.voice p { align-self: end; margin-bottom: 30px; font-size: 22px; font-weight: 400; }

.box {
  padding: 20px;
  border: 2px solid #1e1f23;
  border-radius: 14px;
  background: var(--raised);
}
.box h2 { color: var(--muted); }
.sound { display: flex; align-items: center; gap: 12px; }
.sound h2 { flex: 1; }
.sound-check {
  height: 50px;
  padding: 0 16px;
  border: 2px solid var(--line);
  border-radius: 10px;
  background: #0e0f11;
  color: #dfe1ea;
  font-size: 22px;
  font-weight: 500;
}
.dismiss { width: 44px; height: 52px; align-items: center; justify-content: center; }

.ask {
  position: relative;
  display: flex;
  flex-direction: column;
  min-height: 600px;
  border: 2px solid #1e1f23;
  border-radius: 14px;
  background: #181a19;
  box-shadow: 0 16px 64px rgba(0, 0, 0, .4);
}
.ask h2 {
  padding: 0 24px;
  border-bottom: 2px solid #1b1d1c;
  font-size: 22px;
  line-height: 64px;
  font-weight: 500;
}
.ask-body { flex: 1; padding: 26px 24px; }
.ask h3 { font-size: 24px; line-height: 38px; font-weight: 500; }
.chips { display: flex; flex-wrap: wrap; gap: 14px 10px; margin-top: 14px; }
.chip {
  height: 38px;
  padding: 0 16px;
  border: 2px solid #1e1f24;
  border-radius: 20px;
  background: #131415;
  color: var(--soft);
  font-size: 20px;
  line-height: 32px;
}
.ask-foot { padding: 16px; border-top: 2px solid #1b1d1c; }
.composer {
  display: flex;
  align-items: center;
  gap: 12px;
  height: 74px;
  padding: 0 16px;
  border: 2px solid var(--line);
  border-radius: 12px;
  background: var(--panel);
}
.attach { width: 48px; height: 48px; align-items: center; justify-content: center; }
.composer input { flex: 1; min-width: 0; padding-top: 6px; font-size: 22px; }
.send {
  display: grid;
  place-items: center;
  width: 48px;
  height: 48px;
  border-radius: 50%;
  background: var(--raised);
  color: var(--faint);
}

.box-head { display: flex; align-items: center; justify-content: space-between; }
.badge {
  display: flex;
  align-items: center;
  gap: 8px;
  height: 36px;
  padding: 0 10px;
  border: 2px solid #1b1c20;
  border-radius: 10px;
  color: #dfe1ea;
  font-size: 20px;
  font-weight: 500;
}
.facts { display: grid; gap: 12px; margin: 16px 0; font-size: 20px; line-height: 28px; }
.facts div { display: flex; justify-content: space-between; }
.facts dt { color: var(--muted); }
.facts dd { font-weight: 500; }
.runs { display: grid; gap: 10px; }
.runs + .runs { margin-top: 16px; }
.run {
  padding: 10px 16px 7px;
  border: 2px solid var(--line);
  border-radius: 8px;
  background: var(--panel);
}
.run h3 { font-size: 20px; line-height: 28px; font-weight: 500; color: #dfe1ea; }
.run p { font-size: 22px; line-height: 30px; color: var(--muted); }
.run-actions { display: flex; gap: 12px; margin-top: 12px; }
.run-side { display: flex; justify-content: flex-end; margin-top: 4px; }
.mini {
  min-width: 90px;
  height: 44px;
  padding: 0 12px;
  border: 2px solid #2f3033;
  border-radius: 8px;
  background: #1c1d20;
  color: #dfe1ea;
  font-size: 22px;
  font-weight: 500;
}
```
